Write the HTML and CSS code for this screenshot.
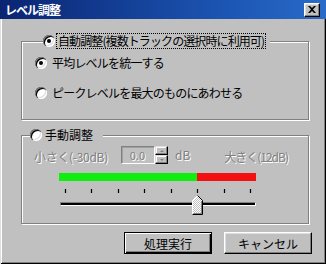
FILE: index.html
```html
<!DOCTYPE html>
<html lang="ja">
<head>
    <meta charset="UTF-8">
    <title>レベル調整</title>
    <link rel="stylesheet" href="styles.css">
</head>
<body>
    <div class="window">
        <div class="titlebar">
            <span class="title">レベル調整</span>
            <button class="close-btn">
                <svg width="8" height="7" viewBox="0 0 8 7"><path d="M0 0h2l2 2 2-2h2L5 3.5 8 7H6L4 5 2 7H0l3-3.5z" fill="#000"/></svg>
            </button>
        </div>
        <div class="client">
            <fieldset class="group group-auto">
                <legend><span class="radio checked"></span><span class="legend-text focus">自動調整(複数トラックの選択時に利用可)</span></legend>
                <div class="options">
                    <label class="option"><span class="radio checked"></span>平均レベルを統一する</label>
                    <label class="option"><span class="radio"></span>ピークレベルを最大のものにあわせる</label>
                </div>
            </fieldset>

            <fieldset class="group group-manual">
                <legend><span class="radio"></span><span class="legend-text">手動調整</span></legend>
                <div class="range-row">
                    <span class="dim range-min">小さく(-30dB)</span>
                    <div class="spin">
                        <span class="spin-edit dim">0.0</span>
                        <span class="spin-btns">
                            <span class="spin-btn"><i class="arrow up"></i></span>
                            <span class="spin-btn"><i class="arrow down"></i></span>
                        </span>
                    </div>
                    <span class="dim unit">dB</span>
                    <span class="dim range-max">大きく(12dB)</span>
                </div>
                <div class="slider">
                    <div class="level-bar">
                        <span class="level-green" style="width: 138px"></span>
                        <span class="level-red"></span>
                    </div>
                    <div class="ticks">
                        <i></i><i></i><i></i><i></i><i></i><i></i><i></i><i></i>
                    </div>
                    <div class="track"></div>
                    <svg class="thumb" width="11" height="20" viewBox="0 0 11 20">
                        <defs>
                            <pattern id="dither" width="2" height="2" patternUnits="userSpaceOnUse">
                                <rect width="2" height="2" fill="#c0c0c0"/>
                                <rect width="1" height="1" fill="#fff"/>
                                <rect x="1" y="1" width="1" height="1" fill="#fff"/>
                            </pattern>
                        </defs>
                        <path d="M0.5 19.5V5.5L5.5 0.5L10.5 5.5V19.5Z" fill="url(#dither)"/>
                        <path d="M0.5 19.5V5.5L5.5 0.5" stroke="#fff" fill="none"/>
                        <path d="M5.5 0.5L10.5 5.5V19.5H0.5" stroke="#000" fill="none"/>
                        <path d="M9.5 6V18.5H1.5" stroke="#808080" fill="none"/>
                    </svg>
                </div>
            </fieldset>

            <div class="buttons">
                <button class="btn default">処理実行</button>
                <button class="btn">キャンセル</button>
            </div>
        </div>
    </div>
</body>
</html>
```

FILE: styles.css
```css
body {
    margin: 0;
    font-family: "Noto Sans CJK JP", "Noto Sans", sans-serif;
    font-size: 12px;
    line-height: 14px;
    color: #000;
}
.window {
    width: 326px;
    height: 264px;
    background: #c0c0c0;
    display: flex;
    flex-direction: column;
}
.titlebar {
    height: 19px;
    flex: none;
    display: flex;
    align-items: center;
    justify-content: space-between;
    padding: 0 6px 0 5px;
    background: linear-gradient(90deg, #0a2472 0%, #1c56b4 70%, #2a6ac8 100%);
    box-sizing: border-box;
}
.title {
    color: #fff;
    font-weight: bold;
    font-size: 12px;
    letter-spacing: -1px;
}
.close-btn {
    width: 16px;
    height: 14px;
    padding: 0;
    background: #c0c0c0;
    border: 1px solid;
    border-color: #fff #000 #000 #fff;
    box-shadow: inset -1px -1px 0 #808080, inset 1px 1px 0 #dfdfdf;
    display: flex;
    align-items: center;
    justify-content: center;
    box-sizing: border-box;
}
.client {
    flex: 1;
    box-shadow: inset 1px 0 0 #dfdfdf, inset -1px 0 0 #000, inset 0 -1px 0 #000,
                inset 2px 0 0 #fff, inset -2px 0 0 #808080, inset 0 -2px 0 #808080;
}

/* group boxes */
.group {
    width: 288px;
    margin: 0 0 0 21px;
    padding: 0;
    box-sizing: border-box;
    border: 1px solid #808080;
    box-shadow: 1px 1px 0 #fff, inset 1px 1px 0 #fff;
    min-inline-size: 0;
}
.group legend {
    margin-left: 8px;
    padding: 0 4px 0 0;
    display: flex;
    align-items: center;
    background: #c0c0c0;
}
.legend-text {
    border: 1px solid transparent;
    padding: 0 1px;
    margin-left: 1px;
}
.legend-text.focus {
    border: 1px dotted #000;
    letter-spacing: -0.9px;
}
.group-auto {
    margin-top: 14px;
    padding: 7px 0 19px 13px;
}
.group-manual {
    margin-top: 7px;
    padding: 3px 0 8px 0;
}
.group-manual legend {
    padding-right: 8px;
}

/* radio buttons */
.radio {
    width: 12px;
    height: 12px;
    border-radius: 50%;
    background: #fff;
    box-shadow: inset 1px 1px 0 #808080, inset 2px 2px 0 #000, inset -1px -1px 0 #fff, inset -2px -2px 0 #dfdfdf;
    display: inline-flex;
    align-items: center;
    justify-content: center;
    flex: none;
}
.radio.checked::after {
    content: "";
    width: 4px;
    height: 4px;
    border-radius: 50%;
    background: #000;
}
.options {
    display: flex;
    flex-direction: column;
    gap: 16px;
}
.option {
    display: flex;
    align-items: center;
    gap: 5px;
    letter-spacing: -0.8px;
}

/* manual adjust */
.dim {
    color: #808080;
    text-shadow: 1px 1px 0 #fff;
}
.range-row {
    display: flex;
    align-items: center;
    height: 18px;
    padding: 0 20px 0 12px;
}
.range-min {
    width: 87px;
    padding-top: 3px;
    letter-spacing: -0.3px;
}
.range-max {
    margin-left: auto;
    padding-top: 3px;
    letter-spacing: -1px;
}
.unit {
    margin-left: 7px;
}
.spin {
    display: flex;
    height: 18px;
}
.spin-edit {
    width: 34px;
    box-sizing: border-box;
    border: 1px solid;
    border-color: #808080 #fff #fff #808080;
    box-shadow: inset 1px 1px 0 #a0a0a0;
    text-align: right;
    padding: 1px 9px 0 0;
    font-size: 11px;
}
.spin-btns {
    width: 13px;
    display: flex;
    flex-direction: column;
}
.spin-btn {
    flex: 1;
    box-sizing: border-box;
    border: 1px solid;
    border-color: #dfdfdf #000 #000 #dfdfdf;
    box-shadow: inset -1px -1px 0 #808080, inset 1px 1px 0 #fff;
    display: flex;
    align-items: center;
    justify-content: center;
}
.arrow {
    width: 0;
    height: 0;
    border-left: 2px solid transparent;
    border-right: 2px solid transparent;
}
.arrow.up {
    border-bottom: 2px solid #808080;
}
.arrow.down {
    border-top: 2px solid #808080;
}

/* slider */
.slider {
    position: relative;
    width: 197px;
    margin: 9px 0 0 37px;
    padding-bottom: 9px;
}
.level-bar {
    display: flex;
    height: 8px;
}
.level-green {
    background: #10ee10;
}
.level-red {
    flex: 1;
    background: #f21010;
}
.ticks {
    display: flex;
    justify-content: space-between;
    height: 7px;
    margin-top: 7px;
    padding: 0 5px 0 6px;
}
.ticks i {
    width: 1px;
    height: 4px;
    margin-top: 1px;
    background: #000;
    box-shadow: -1px 0 0 #a8a8a8, 1px 0 0 #a8a8a8;
}
.track {
    height: 2px;
    margin: 7px 0 0 1px;
    border: 1px solid;
    border-color: #808080 #fff #fff #808080;
    background: #000;
}
.thumb {
    position: absolute;
    left: 133px;
    top: 22px;
}

/* dialog buttons */
.buttons {
    display: flex;
    justify-content: flex-end;
    gap: 12px;
    margin-top: 8px;
    padding-right: 14px;
}
.btn {
    width: 88px;
    height: 22px;
    padding: 0;
    font-family: inherit;
    font-size: 12px;
    background: #c0c0c0;
    border: 1px solid;
    border-color: #fff #000 #000 #fff;
    box-shadow: inset -1px -1px 0 #808080, inset 1px 1px 0 #dfdfdf;
    box-sizing: border-box;
}
.btn.default {
    border: 1px solid #000;
    box-shadow: inset 1px 1px 0 #fff, inset -1px -1px 0 #000, inset -2px -2px 0 #808080;
}
```
